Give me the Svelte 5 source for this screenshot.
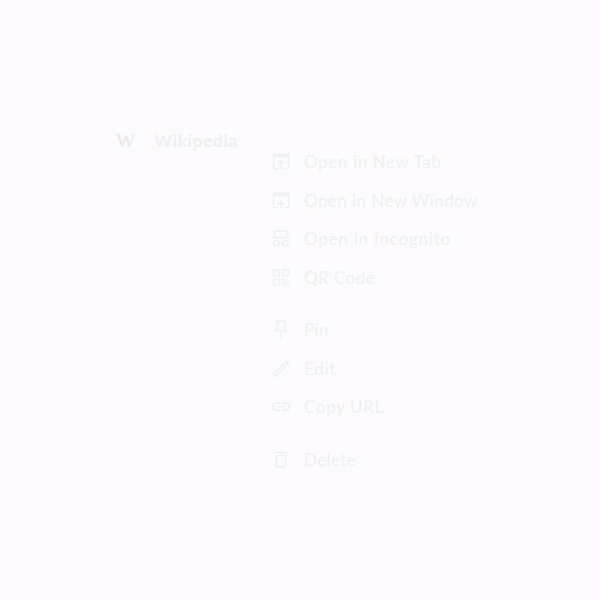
<script>
  const groups = [
    [
      { label: 'Open in New Tab', icon: 'tab', spacing: 0.63 },
      { label: 'Open in New Window', icon: 'window', spacing: 0.44 },
      { label: 'Open in Incognito', icon: 'incognito', spacing: 0.79 },
      { label: 'QR Code', icon: 'qr', spacing: 0.45 }
    ],
    [
      { label: 'Pin', icon: 'pin', spacing: 0.3 },
      { label: 'Edit', icon: 'edit', spacing: 0.8 },
      { label: 'Copy URL', icon: 'link', spacing: 0.65 }
    ],
    [{ label: 'Delete', icon: 'trash', spacing: 0.4 }]
  ];

  const paths = {
    tab: 'M4 3h16a1 1 0 0 1 1 1v15a1.5 1.5 0 0 1-1.5 1.5H15V19h4.3V7.5H4.7V19H9v1.5H4.5A1.5 1.5 0 0 1 3 19V4a1 1 0 0 1 1-1z M12 10l4 4-1.2 1.2-2-1.9V20.5h-1.6V13.3l-2 1.9L8 14z',
    window: 'M4 3h16a1 1 0 0 1 1 1v15a1.5 1.5 0 0 1-1.5 1.5H16V19h3.3V7.5H4.7V19H8v1.5H4.5A1.5 1.5 0 0 1 3 19V4a1 1 0 0 1 1-1z M11.2 11h1.6v3.7H16v1.6h-3.2v4.2h-1.6v-4.2H8v-1.6h3.2z',
    incognito: 'M6 3h12a2 2 0 0 1 2 2v5h2v1.6H2V10h2V5a2 2 0 0 1 2-2z M5.7 4.7V10h12.6V4.7z M7 13a4 4 0 0 1 3.8 2.8q1.2-.6 2.4 0A4 4 0 1 1 13 17.6q-1-.8-2 0A4 4 0 1 1 7 13z M7 14.8a2.2 2.2 0 1 0 0 4.4 2.2 2.2 0 0 0 0-4.4z M17 14.8a2.2 2.2 0 1 0 0 4.4 2.2 2.2 0 0 0 0-4.4z',
    qr: 'M3 3h8v8H3z M4.8 4.8v4.4h4.4V4.8z M13 3h8v8h-8z M14.8 4.8v4.4h4.4V4.8z M3 13h8v8H3z M4.8 14.8v4.4h4.4v-4.4z M13 13h2v2h-2z M17 13h2v2h-2z M15 15h2v2h-2z M19 15h2v2h-2z M13 17h2v2h-2z M17 17h2v2h-2z M15 19h2v2h-2z M19 19h2v2h-2z',
    pin: 'M6 2h12v1.7h-1.2V11L19 13v1.2h-6.2V21l-.8 1-.8-1v-6.8H5V13l2.2-2V3.7H6z M8.9 3.7v7.9l-.9.9h8l-.9-.9V3.7z',
    edit: 'M14.06 9.02l.92.92L5.92 19H5v-.92l9.06-9.06M17.66 3c-.25 0-.51.1-.7.29l-1.83 1.83 3.75 3.75 1.83-1.83a1 1 0 0 0 0-1.41l-2.34-2.34A.99.99 0 0 0 17.66 3zm-3.6 3.19L3 17.25V21h3.75L17.81 9.94l-3.75-3.75z',
    link: 'M3.9 12c0-1.71 1.39-3.1 3.1-3.1h4V7H7a5 5 0 0 0 0 10h4v-1.9H7A3.1 3.1 0 0 1 3.9 12zM8 12.8h8v-1.6H8v1.6zm9-5.8h-4v1.9h4a3.1 3.1 0 0 1 0 6.2h-4V17h4a5 5 0 0 0 0-10z',
    trash: 'M6 19a2 2 0 0 0 2 2h8a2 2 0 0 0 2-2V7H6v12zM7.8 8.6h8.4v10.6H7.8zM15 3.6l-.8-.8H9.8l-.8.8H5v1.6h14V3.6z'
  };
</script>

<main>
  <div class="site">
    <span class="logo"><b>W</b></span>
    <span class="name">Wikipedia</span>
  </div>
  <div class="menu">
    {#each groups as group}
      <div class="group">
        {#each group as item}
          <div class="item">
            <svg viewBox="0 0 24 24"><path fill-rule="evenodd" d={paths[item.icon]} /></svg>
            <span style="letter-spacing: {item.spacing}px">{item.label}</span>
          </div>
        {/each}
      </div>
    {/each}
  </div>
</main>

<style>
  :global(body) {
    background: #fdfbfe;
  }
  main {
    box-sizing: border-box;
    width: 600px;
    height: 600px;
    padding: 126px 0 0 116px;
    position: relative;
    overflow: hidden;
    background: #fdfbfe;
    font-family: Lato, sans-serif;
  }
  .site {
    display: flex;
    align-items: center;
    height: 28px;
    color: #f0eef1;
  }
  .logo {
    width: 38px;
    font: 18px/28px "Liberation Serif", serif;
    color: #eae8eb;
  }
  .logo b {
    display: inline-block;
    font-weight: 400;
    transform: translateY(1px) scaleX(1.14);
    transform-origin: left;
  }
  .name {
    font-size: 17.5px;
    font-weight: 700;
    letter-spacing: 0.5px;
  }
  .menu {
    position: absolute;
    left: 250px;
    top: 138px;
    box-sizing: border-box;
    width: 257px;
    height: 346px;
    padding: 5px 0;
    border-radius: 8px;
    display: flex;
    flex-direction: column;
    gap: 14px;
    background: #fdfbfe;
    box-shadow: -2px 29px 36px 8px rgba(0, 0, 0, 0.008);
  }
  .item {
    display: flex;
    align-items: center;
    height: 38.5px;
    padding-left: 20px;
    gap: 12px;
    color: #f1eff2;
    font-size: 17px;
    line-height: 24px;
    white-space: nowrap;
  }
  svg {
    width: 22px;
    height: 22px;
    transform: translateY(-0.5px);
    fill: #f0eff4;
  }
</style>
